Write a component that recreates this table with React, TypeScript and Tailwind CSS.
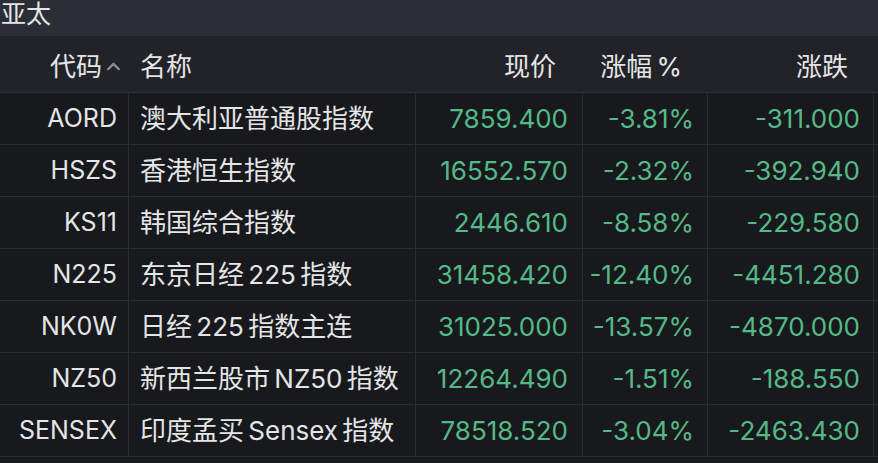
import { ChevronUp } from 'lucide-react'

type Row = {
  code: string
  name: string
  price: string
  pct: string
  change: string
}

const rows: Row[] = [
  { code: 'AORD', name: '澳大利亚普通股指数', price: '7859.400', pct: '-3.81%', change: '-311.000' },
  { code: 'HSZS', name: '香港恒生指数', price: '16552.570', pct: '-2.32%', change: '-392.940' },
  { code: 'KS11', name: '韩国综合指数', price: '2446.610', pct: '-8.58%', change: '-229.580' },
  { code: 'N225', name: '东京日经 225 指数', price: '31458.420', pct: '-12.40%', change: '-4451.280' },
  { code: 'NK0W', name: '日经 225 指数主连', price: '31025.000', pct: '-13.57%', change: '-4870.000' },
  { code: 'NZ50', name: '新西兰股市 NZ50 指数', price: '12264.490', pct: '-1.51%', change: '-188.550' },
  { code: 'SENSEX', name: '印度孟买 Sensex 指数', price: '78518.520', pct: '-3.04%', change: '-2463.430' },
]

const cols = 'grid grid-cols-[128px_287px_167px_125px_166px_5px]'

export default function App() {
  return (
    <div
      className="h-[463px] w-[878px] overflow-hidden bg-[#18191d] text-[#e4e5e7]"
      style={{ fontFamily: 'Inter, "Noto Sans CJK SC", sans-serif' }}
    >
      {/* title bar */}
      <div className="h-[36px] bg-[#2b2e35] pl-[1px] text-[25px] leading-[28px]">亚太</div>

      {/* header */}
      <div className={`${cols} h-[57px] items-center border-b border-[#2d2f34] bg-[#212328] pt-[5px] text-[26px]`}>
        <div className="flex items-center justify-end pr-[4px]">
          <span>代码</span>
          <ChevronUp className="ml-[1px] h-[21px] w-[21px] text-[#8a8d93]" strokeWidth={2.5} />
        </div>
        <div className="pl-[12px]">名称</div>
        <div className="pr-[26px] text-right">现价</div>
        <div className="pr-[25px] text-right [word-spacing:-3px]">涨幅 %</div>
        <div className="pr-[25px] text-right">涨跌</div>
        <div />
      </div>

      {/* data rows */}
      {rows.map((r) => (
        <div key={r.code} className={`${cols} h-[52px] items-stretch border-b border-[#2b2d32] text-[26px]`}>
          <div className="flex items-center justify-end pr-[11px] text-[25px]">{r.code}</div>
          <div className="flex items-center border-l border-[#2b2d32] pl-[11px] [word-spacing:-3px]">{r.name}</div>
          <div className="flex items-center justify-end border-l border-[#2b2d32] pr-[14px] text-[#55b987]">
            {r.price}
          </div>
          <div className="flex items-center justify-end border-l border-[#2b2d32] pr-[13px] text-[#55b987]">
            {r.pct}
          </div>
          <div className="flex items-center justify-end border-l border-[#2b2d32] pr-[13px] text-[#55b987]">
            {r.change}
          </div>
          <div className="border-l border-[#2b2d32]" />
        </div>
      ))}
    </div>
  )
}
